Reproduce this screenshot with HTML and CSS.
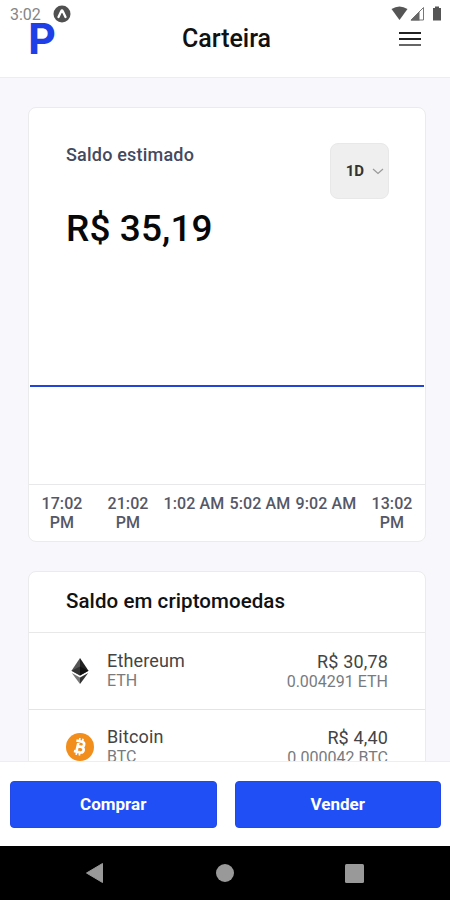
FILE: index.html
```html
<!DOCTYPE html>
<html lang="pt-BR">
<head>
<meta charset="utf-8">
<title>Carteira</title>
<link rel="stylesheet" href="styles.css">
</head>
<body>
<div class="phone">
  <div class="status">
    <span class="clock">3:02</span>
    <svg class="status-app" width="18" height="18" viewBox="0 0 18 18"><circle cx="9" cy="9" r="8.5" fill="#505050"/><path d="M5.500 12 8.200 6.200Q9 4.800 9.800 6.200L12.500 12" fill="none" stroke="#fff" stroke-width="2.3" stroke-linecap="round"/></svg>
    <svg class="status-icons" width="52" height="16" viewBox="0 0 52 16"><path d="M1.500 3Q9.500-2 17.500 3L9.500 14Z" fill="#555"/><path d="M21 14 33.500 1.500V14Z" fill="#fff" stroke="#777" stroke-width="1"/><path d="M20.500 14.500 29.500 5.500V14.500Z" fill="#666"/><path d="M43 2H45V.5H49V2H51V14.500H43Z" fill="#555"/></svg>
  </div>
  <header class="header">
    <div class="logo">P</div>
    <h1 class="title">Carteira</h1>
    <div class="menu"><i></i><i></i><i></i></div>
  </header>
  <main class="content">
    <section class="card balance">
      <div class="balance-top">
        <div>
          <div class="label">Saldo estimado</div>
          <div class="amount">R$ 35,19</div>
        </div>
        <div class="period"><span>1D</span><svg width="12" height="7" viewBox="0 0 12 7"><path d="M1 1 6 5.500 11 1" fill="none" stroke="#999" stroke-width="1.2"/></svg></div>
      </div>
      <div class="chart"><div class="line"></div></div>
      <div class="times"><span>17:02<br>PM</span><span>21:02<br>PM</span><span>1:02 AM</span><span>5:02 AM</span><span>9:02 AM</span><span>13:02<br>PM</span></div>
    </section>
    <section class="card coins">
      <h2 class="coins-title">Saldo em criptomoedas</h2>
      <div class="coin">
        <svg class="coin-icon" width="28" height="28" viewBox="0 0 28 28"><path d="M14 1V18.500L5.500 13.700Z" fill="#555"/><path d="M14 1V18.500L22.500 13.700Z" fill="#222"/><path d="M14 9.500V18.500L5.500 13.700Z" fill="#333"/><path d="M14 9.500V18.500L22.500 13.700Z" fill="#111"/><path d="M5.800 16 14 20.500V27Z" fill="#777"/><path d="M22.200 16 14 20.500V27Z" fill="#333"/></svg>
        <div class="coin-name"><div class="main-text">Ethereum</div><div class="sub-text">ETH</div></div>
        <div class="coin-value"><div class="main-text">R$ 30,78</div><div class="sub-text">0.004291 ETH</div></div>
      </div>
      <div class="coin">
        <svg class="coin-icon" width="28" height="28" viewBox="0 0 28 28"><circle cx="14" cy="14" r="14" fill="#f28e1c"/><g transform="rotate(13 14 14)" fill="none" stroke="#fff"><path d="M9 8.500H14.800Q17.500 8.500 17.500 11T14.800 13.600H11.500M14.800 13.600Q18.300 13.800 18.300 16.500T15 19.300H9M11.500 8.500V19.300" stroke-width="2.600"/><path d="M12 5.300V8.500M15.200 5.300V8.500M12 19V22.500M15.200 19V22.500" stroke-width="1.700"/></g></svg>
        <div class="coin-name"><div class="main-text">Bitcoin</div><div class="sub-text">BTC</div></div>
        <div class="coin-value"><div class="main-text">R$ 4,40</div><div class="sub-text">0.000042 BTC</div></div>
      </div>
    </section>
  </main>
  <footer class="actions"><button>Comprar</button><button>Vender</button></footer>
  <nav class="nav">
    <svg width="18" height="20" viewBox="0 0 18 20"><path d="M.5 10 16.500.5V19.500Z" fill="#999" stroke="#999" stroke-linejoin="round"/></svg>
    <svg width="18" height="18" viewBox="0 0 18 18"><circle cx="9" cy="9" r="9" fill="#999"/></svg>
    <svg width="19" height="19" viewBox="0 0 19 19"><rect width="19" height="19" rx="1.500" fill="#999"/></svg>
  </nav>
</div>
</body>
</html>
```
FILE: styles.css
```css
* { box-sizing: border-box; }
body { margin: 0; font-family: Roboto, sans-serif; color: #111; background: #fff; }
h1, h2 { margin: 0; font-weight: 500; }
.phone { position: relative; width: 450px; height: 900px; display: flex; flex-direction: column; overflow: hidden; }
.status { position: absolute; top: 0; left: 0; right: 0; height: 28px; padding: 0 8px 0 10px; display: flex; align-items: center; }
.clock { font-size: 16px; color: #858585; line-height: 28px; padding-top: 2px; }
.status-app { margin-left: 12px; }
.status-icons { margin-left: auto; }
.header { height: 78px; flex: none; display: grid; grid-template-columns: 90px 1fr 90px; align-items: center; padding: 0 29px 0 27px; border-bottom: 1px solid #ededf1; }
.logo { font: 700 43px/43px Inter, sans-serif; color: #1f3fe8; padding-left: 1px; }
.title { font-size: 25px; line-height: 28px; text-align: center; padding-left: 5px; }
.menu { width: 22px; justify-self: end; display: grid; gap: 4px; }
.menu i { height: 2px; background: #222; }
.menu i:last-child { background: #666; }
.content { flex: 1; min-height: 0; overflow: hidden; background: #f8f8fc; padding: 29px 24px 0 28px; display: flex; flex-direction: column; gap: 29px; }
.card { flex: none; background: #fff; border: 1px solid #ebebed; border-radius: 8px; }
.balance { height: 435px; display: flex; flex-direction: column; }
.balance-top { display: flex; justify-content: space-between; padding: 35px 36px 0 37px; height: 179px; }
.label { font-size: 18px; line-height: 24px; font-weight: 500; color: #444960; letter-spacing: .2px; }
.amount { margin-top: 40px; font-size: 37px; line-height: 44px; font-weight: 500; color: #080808; letter-spacing: .1px; }
.period { width: 59px; height: 56px; border: 1px solid #e8e8e8; border-radius: 8px; background: #efefef; display: flex; align-items: center; justify-content: flex-end; gap: 8px; padding-right: 4px; font-size: 15px; font-weight: 700; color: #333; }
.chart { flex: 1; padding: 98px 1px 0; }
.line { height: 2px; background: #2345d5; }
.times { height: 57px; border-top: 1px solid #e8e8ea; display: grid; grid-template-columns: repeat(6, 66px); padding-top: 9px; text-align: center; font-size: 16px; line-height: 19px; font-weight: 500; color: #555766; letter-spacing: .1px; white-space: nowrap; }
.coins-title { height: 61px; border-bottom: 1px solid #e8e8e8; padding-left: 37px; font-size: 20.500px; line-height: 59px; letter-spacing: .08px; }
.coin { height: 77px; display: flex; align-items: center; padding: 0 37px 1px; border-bottom: 1px solid #e4e4e4; }
.coin:last-child { padding-bottom: 3px; }
.coin-name { margin-left: 13px; }
.coin-value { margin-left: auto; text-align: right; padding-top: 2px; }
.main-text { font-size: 18px; line-height: 20px; color: #444; letter-spacing: .15px; }
.sub-text { font-size: 16px; line-height: 20px; color: #777b80; }
.actions { flex: none; height: 85px; border-top: 1px solid #eee; padding: 19px 9px 0 10px; display: grid; grid-template-columns: 1fr 1fr; gap: 18px; align-items: start; }
.actions button { height: 47px; padding: 0 0 2px; border: 1px solid #2348e5; border-radius: 4px; background: #2050f5; color: #fff; font: 700 17px/20px Roboto, sans-serif; }
.nav { height: 54px; flex: none; background: #000; display: flex; align-items: center; justify-content: space-between; padding: 0 86px; }
```
